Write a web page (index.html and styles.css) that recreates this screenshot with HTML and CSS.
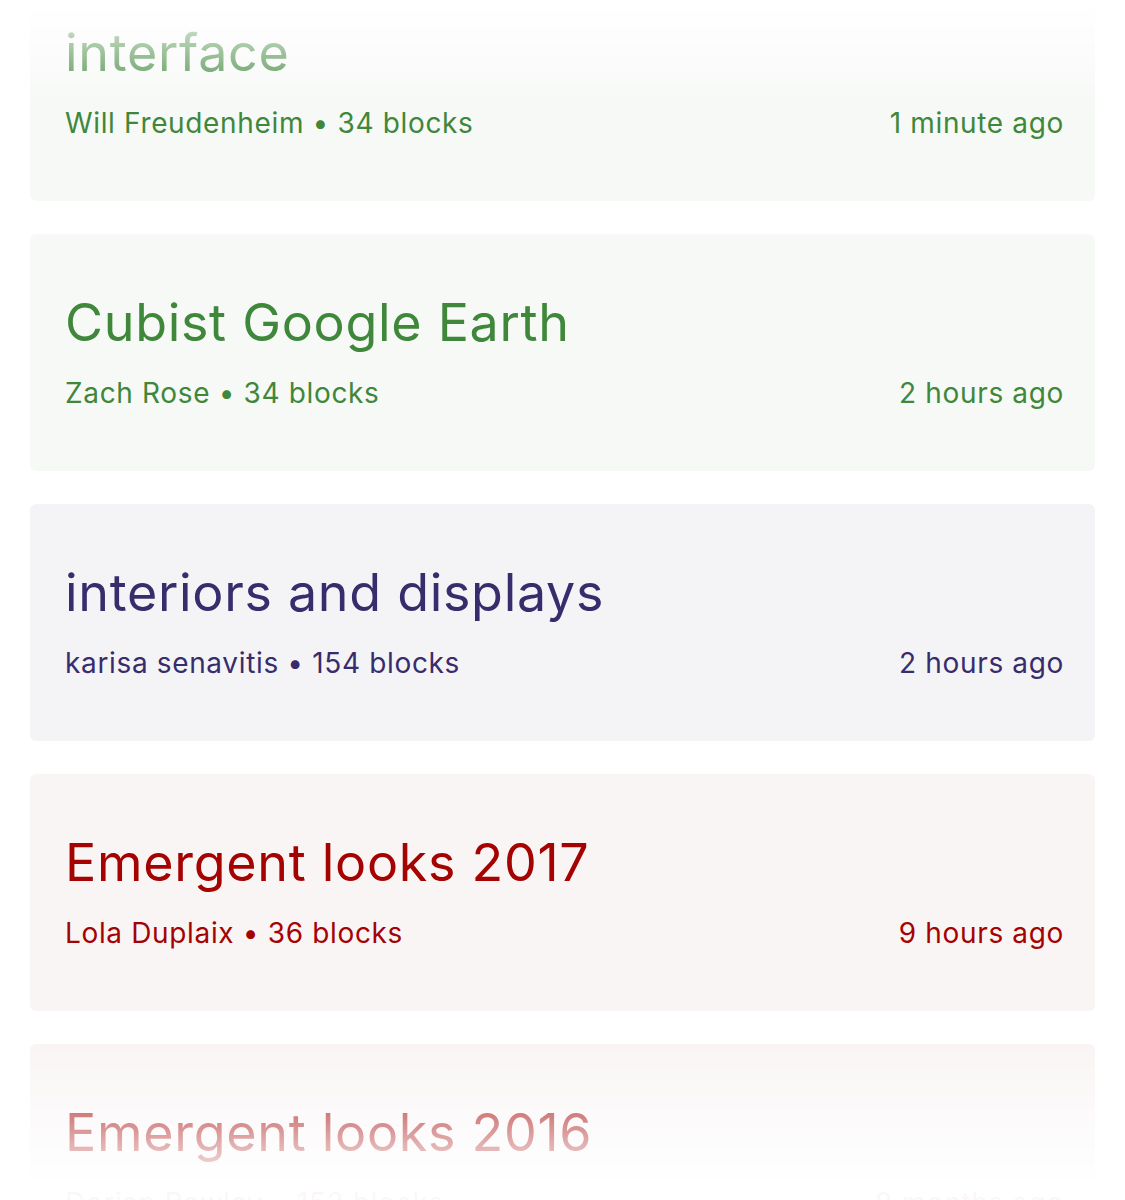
FILE: index.html
```html
<!DOCTYPE html>
<html>
<head>
  <title>Channels</title>
  <link rel="stylesheet" href="styles.css">
</head>
<body>
  <div class="channel-list">
    <div class="channel-card green">
      <h2 class="channel-title">interface</h2>
      <div class="channel-meta">
        <span>Will Freudenheim &bull; 34 blocks</span>
        <span>1 minute ago</span>
      </div>
    </div>

    <div class="channel-card green">
      <h2 class="channel-title">Cubist Google Earth</h2>
      <div class="channel-meta">
        <span>Zach Rose &bull; 34 blocks</span>
        <span>2 hours ago</span>
      </div>
    </div>

    <div class="channel-card purple">
      <h2 class="channel-title">interiors and displays</h2>
      <div class="channel-meta">
        <span>karisa senavitis &bull; 154 blocks</span>
        <span>2 hours ago</span>
      </div>
    </div>

    <div class="channel-card red">
      <h2 class="channel-title">Emergent looks 2017</h2>
      <div class="channel-meta">
        <span>Lola Duplaix &bull; 36 blocks</span>
        <span>9 hours ago</span>
      </div>
    </div>

    <div class="channel-card red">
      <h2 class="channel-title">Emergent looks 2016</h2>
      <div class="channel-meta">
        <span>Dorian Rowley &bull; 153 blocks</span>
        <span>8 months ago</span>
      </div>
    </div>
  </div>

  <div class="fade fade-top"></div>
  <div class="fade fade-bottom"></div>
</body>
</html>
```

FILE: styles.css
```css
body {
  font-family: Inter, "Noto Sans", sans-serif;
  background-color: #fff;
  margin: 0;
  padding: 0;
  height: 1200px;
  overflow: hidden;
}

.channel-list {
  display: flex;
  flex-direction: column;
  gap: 33px;
  padding: 0 30px;
  margin-top: -36px;
}

.channel-card {
  height: 237px;
  box-sizing: border-box;
  padding: 59px 31px 0 35px;
  border-radius: 6px;
}

.channel-title {
  margin: 0;
  font-size: 52px;
  line-height: 60px;
  font-weight: 400;
  letter-spacing: 0.7px;
}

.channel-meta {
  display: flex;
  justify-content: space-between;
  margin-top: 23px;
  font-size: 28px;
  line-height: 34px;
  letter-spacing: 0.65px;
}

.green {
  background-color: #f7f9f7;
  color: #3f873a;
}

.purple {
  background-color: #f4f4f7;
  color: #382c6c;
}

.red {
  background-color: #f9f5f5;
  color: #a50202;
}

/* fade over the list edges */
.fade {
  position: fixed;
  left: 0;
  right: 0;
  pointer-events: none;
}

.fade-top {
  top: 0;
  height: 110px;
  background: linear-gradient(to bottom, rgba(255, 255, 255, 0.95), rgba(255, 255, 255, 0));
}

.fade-bottom {
  bottom: 0;
  height: 160px;
  background: linear-gradient(to top, rgba(255, 255, 255, 0.97) 8%, rgba(255, 255, 255, 0));
}
```
